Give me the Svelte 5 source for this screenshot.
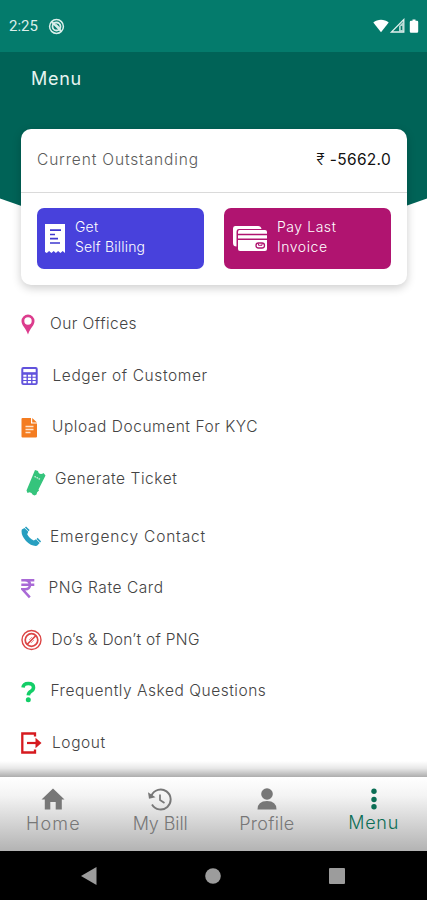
<script>
  let active = 'Menu';

  // gap = space between icon and label, ls = letter spacing
  const items = [
    { icon: 'pin', label: 'Our Offices', w: 14, gap: 15, ls: 0.45 },
    { icon: 'calc', label: 'Ledger of Customer', w: 17, gap: 14.5, ls: 0.6 },
    { icon: 'doc', label: 'Upload Document For KYC', w: 17, gap: 14, ls: 0.55 },
    { icon: 'ticket', label: 'Generate Ticket', w: 28, gap: 6, ls: 0.55 },
    { icon: 'phone', label: 'Emergency Contact', w: 20, gap: 9, ls: 0.82 },
    { icon: 'rupee', label: 'PNG Rate Card', w: 14, gap: 13.5, ls: 0.55 },
    { icon: 'ban', label: 'Do’s & Don’t of PNG', w: 21, gap: 9.5, ls: 0.28 },
    { icon: 'faq', label: 'Frequently Asked Questions', w: 16, gap: 13.5, ls: 0.53 },
    { icon: 'logout', label: 'Logout', w: 21, gap: 10, ls: 0.6 }
  ];

  const tabs = [
    { label: 'Home', ls: 1.2 },
    { label: 'My Bill', ls: -0.1 },
    { label: 'Profile', ls: 0.3 },
    { label: 'Menu', ls: 0.7 }
  ];
</script>

<div class="screen">
  <div class="status">
    <span class="time">2:25</span>
    <svg class="dnd" width="17" height="17" viewBox="0 0 17 17" fill="none" stroke="#dcefeb">
      <circle cx="8.5" cy="8.5" r="6.9" stroke-width="1.5" />
      <circle cx="8.5" cy="8.5" r="4" stroke-width="1.8" />
      <path d="M4 4l9 9" stroke-width="2" />
      <path d="M8 6.5l3.5 3.5" stroke-width="1.5" />
    </svg>
    <svg class="signals" width="48" height="16" viewBox="0 0 48 16">
      <path d="M0.3 4.6C4.500 0.800 11.500 0.800 15.700 4.600L8 14.200z" fill="#fff" />
      <path d="M30.800 1.600V14H18.400z" fill="none" stroke="#e3f1ee" stroke-width="1.300" />
      <path d="M30 4V13.500H26V8z" fill="#dcefeb" opacity=".8" />
      <path d="M28.500 8v4" stroke="#087a69" stroke-width="1.500" />
      <path d="M39.500 1.500h3v1.300h1.500q1.200 0 1.200 1.200v9.500q0 1.200-1.200 1.200h-6q-1.200 0-1.200-1.200V4q0-1.200 1.200-1.200h1.500z" fill="#fff" />
    </svg>
  </div>

  <header>
    <h1>Menu</h1>
    <svg class="curve" width="427" height="52" viewBox="0 0 427 52" preserveAspectRatio="none">
      <path d="M0 0H427V7.500Q213 87 0 7.500z" fill="#006357" />
    </svg>
  </header>

  <section class="card">
    <div class="outstanding">
      <span class="caption">Current Outstanding</span>
      <span class="amount"><i>₹</i>-5662.0</span>
    </div>
    <div class="actions">
      <button class="billing">
        <svg width="22" height="32" viewBox="0 0 22 32">
          <path d="M1 1H21V30l-2.300-2-2.300 2-2.300-2-2.200 2-2.200-2-2.300 2-2.300-2-2.300 2-1.800-1z" fill="#fff" />
          <path d="M6 7.200h11M6 11.500h5M6 15.700h8M6 20h10" stroke="#3f38cf" stroke-width="1.700" />
        </svg>
        <span>Get<br />Self Billing</span>
      </button>
      <button class="invoice">
        <svg width="36" height="28" viewBox="0 0 36 28">
          <path d="M3 1H26q3 0 3.500 3H7Q4.500 4 4.500 7v14.500Q1 21.500 1 18V3.500Q1 1 3 1z" fill="#fff" />
          <path d="M7.500 5H33q2 0 2 2v17q0 2-2 2H8q-2 0-2-2V7q0-2 1.500-2z" fill="#fff" />
          <path d="M5.500 9.500H35M5.500 14.300H35" stroke="#b01470" stroke-width="1.500" />
          <rect x="24" y="18" width="8.500" height="5" rx="2.500" fill="none" stroke="#b01470" stroke-width="1.300" />
          <path d="M26.500 18.500v1.800h3.500v-1.800" fill="none" stroke="#b01470" />
        </svg>
        <span>Pay Last<br />Invoice</span>
      </button>
    </div>
  </section>

  <ul>
    {#each items as item}
      <li class={item.icon}>
        <svg width={item.w} height="28" viewBox="0 0 {item.w} 28">
          {#if item.icon === 'pin'}
            <path d="M7 4.500a6.500 6.500 0 0 0-6.500 6.500C.5 15.500 4.500 17.500 7 24.500 9.500 17.500 13.500 15.500 13.500 11A6.500 6.500 0 0 0 7 4.500zM7 7.300a3.700 3.700 0 1 1 0 7.400 3.700 3.700 0 0 1 0-7.400z" fill="#dc3c8d" fill-rule="evenodd" />
          {:else if item.icon === 'calc'}
            <rect x=".3" y="6" width="16.400" height="18" rx="2" fill="#6152dc" />
            <path d="M2.300 8h12.400v3.200H2.300z" fill="#fff" />
            <path d="M2.300 14.700h12.400M2.300 17.900h12.400M2.300 21.100h12.400" stroke="#fff" stroke-width="2.100" stroke-dasharray="3.200 1.400" />
          {:else if item.icon === 'doc'}
            <path d="M1.500 5H10v5.500h6V23.500q0 1-1 1H1.500q-1 0-1-1V6q0-1 1-1zM11.200 5l4.800 4.500h-4.800z" fill="#f47c20" />
            <path d="M4.500 13.500h8M4.500 16.500h8M4.500 19.500h5" stroke="#ffe2c8" stroke-width="1.300" />
          {:else if item.icon === 'ticket'}
            <path d="M14 2L17 3Q17.500 6 20 6Q21.500 5.800 22.500 5L24.500 7.500L17.500 21.500L18 22.500Q15.500 24 15.500 26.500L13.500 27.500L11.500 26.500Q11 24.500 8.500 24.300L6.500 25L5.500 22.500Z" fill="#35c47c" />
            <path d="M13.500 8.500l6 3" stroke="#d7f5e5" stroke-width="1.300" stroke-dasharray="1.500 .8" />
          {:else if item.icon === 'phone'}
            <path d="M.8 7.500L3.500 6 7.300 9.800 6.200 12.300Q8 16.200 12.800 18.500L15 17.300 18.700 21 16 23.800Q10.500 24.600 5 19Q-.5 13 .8 7.500z" fill="#279fc0" />
            <path d="M4.500 5l3.600 3.600M16.100 16.400l3.500 3.500" stroke="#279fc0" stroke-width="1.500" />
          {:else if item.icon === 'rupee'}
            <path d="M.3 6.300h13M.3 10.800h13M.5 6.300h3.500q5 .3 5 4.500 0 4.500-5 4.500H1.500L8.800 23.300" fill="none" stroke="#a969d6" stroke-width="2.500" />
          {:else if item.icon === 'ban'}
            <circle cx="10.500" cy="15" r="9.500" fill="none" stroke="#dc4545" stroke-width="1.400" />
            <circle cx="10.500" cy="15" r="6.300" fill="none" stroke="#dc4545" stroke-width="1.700" />
            <path d="M6 19.500l9-9" stroke="#dc4545" stroke-width="1.700" />
            <path d="M8 15l3-3M10 18l3-3" stroke="#e98080" stroke-width=".8" />
          {:else if item.icon === 'faq'}
            <path d="M2 10.500Q2.500 6.500 7.300 6.500q5.200 0 5.200 4 0 2.200-2.500 3.800-2.500 1.500-2.700 4" fill="none" stroke="#13ce68" stroke-width="3.600" />
            <circle cx="7.300" cy="22.800" r="2.500" fill="#13ce68" />
          {:else}
            <path d="M14 8.500V5.500H1.300V24.500H14V21.500" fill="none" stroke="#d61a1f" stroke-width="2.300" />
            <path d="M6 15H17" stroke="#d61a1f" stroke-width="2.200" />
            <path d="M14.500 9.800L20.500 15 14.500 20.200z" fill="#d61a1f" />
          {/if}
        </svg>
        <span style="margin-left:{item.gap}px;letter-spacing:{item.ls}px">{item.label}</span>
      </li>
    {/each}
  </ul>

  <nav>
    {#each tabs as tab}
      <button class:active={tab.label === active} on:click={() => (active = tab.label)}>
        <svg width="26" height="24" viewBox="0 0 26 24" fill="currentColor">
          {#if tab.label === 'Home'}
            <path d="M13 .5L24.500 11.500H21.800V21.500H15.700V14H10.300V21.500H4.800V11.500H1.500z" />
          {:else if tab.label === 'My Bill'}
            <path d="M4.500 7.500A10 10 0 1 1 5 16.500" fill="none" stroke="currentColor" stroke-width="1.900" />
            <path d="M1 4.300L2 10.800 8.500 9.300z" />
            <path d="M13 6.500v5.500l4.500 3" fill="none" stroke="currentColor" stroke-width="1.700" />
          {:else if tab.label === 'Profile'}
            <circle cx="13" cy="6" r="5.800" />
            <path d="M3.500 21.500Q3.500 13 13 13t9.500 8.500z" />
          {:else}
            <circle cx="13" cy="3.300" r="2.700" />
            <circle cx="13" cy="11.500" r="2.700" />
            <circle cx="13" cy="18.700" r="2.700" />
          {/if}
        </svg>
        <span style="letter-spacing:{tab.ls}px">{tab.label}</span>
      </button>
    {/each}
  </nav>

  <div class="system">
    <svg width="16" height="18" viewBox="0 0 16 18"><path d="M0 9L15.500 0V18z" fill="#9c9c9c" /></svg>
    <svg width="16" height="16" viewBox="0 0 16 16"><circle cx="8" cy="8" r="7.800" fill="#9c9c9c" /></svg>
    <svg width="16" height="16" viewBox="0 0 16 16"><rect width="16" height="16" rx="1" fill="#9c9c9c" /></svg>
  </div>
</div>

<style>
:global(body) {
  margin: 0;
  background: #fff;
}
.screen {
  width: 427px;
  height: 900px;
  overflow: hidden;
  display: flex;
  flex-direction: column;
  background: #fff;
  color: #444;
  font-family: Inter, 'Open Sans', sans-serif;
  font-weight: 300;
}
svg {
  display: block;
  flex: none;
}
button {
  border: 0;
  padding: 0;
  font: inherit;
}
.status {
  height: 52px;
  flex: none;
  box-sizing: border-box;
  display: flex;
  align-items: center;
  padding: 0 6px 0 9px;
  background: #047b6c;
}
.time {
  color: #dcefeb;
  font: 400 15px Roboto, sans-serif;
  width: 39px;
}
.signals {
  margin-left: auto;
}
header {
  height: 77px;
  flex: none;
  background: #006357;
  display: flex;
  flex-direction: column;
  justify-content: space-between;
}
h1 {
  margin: 15px 0 0 31px;
  color: #e6f3f0;
  font-size: 18px;
  line-height: 24px;
  font-weight: 400;
  letter-spacing: 0.7px;
}
.curve {
  margin-bottom: -114px;
  padding-top: 62px;
  background: linear-gradient(#006357 62px, transparent 62px);
}
.card {
  position: relative;
  flex: none;
  box-sizing: border-box;
  width: 386px;
  height: 156px;
  margin-left: 21px;
  background: #fff;
  border-radius: 10px;
  box-shadow: 0 3px 10px rgba(0, 0, 0, 0.2);
}
.outstanding {
  height: 63px;
  padding: 0 16px;
  display: flex;
  align-items: center;
  justify-content: space-between;
  border-bottom: 1px solid #dadada;
  font-size: 15.5px;
}
.outstanding span {
  margin-top: -2px;
}
.caption {
  letter-spacing: 0.85px;
  color: #5c5c5c;
}
.amount {
  color: #111;
  font-weight: 400;
  letter-spacing: 0.3px;
}
.amount i {
  font-style: normal;
  font-weight: 300;
  margin-right: 5px;
}
.actions {
  display: flex;
  gap: 20px;
  padding: 15px 16px;
}
.actions button {
  width: 167px;
  height: 61px;
  border-radius: 7px;
  display: flex;
  align-items: center;
  text-align: left;
  color: #fff;
  font-size: 14px;
  line-height: 20px;
}
.actions span {
  margin-top: -3px;
}
.billing {
  background: #4841dc;
  padding-left: 7px;
  gap: 9px;
  letter-spacing: 0.2px;
}
.invoice {
  background: #b01470;
  padding-left: 8px;
  gap: 9px;
  letter-spacing: 0.55px;
}
ul {
  list-style: none;
  margin: 0;
  padding: 13px 0 0 21px;
  height: 479px;
  flex: none;
}
li {
  height: 51.6px;
  display: flex;
  align-items: center;
  font-size: 15.5px;
  white-space: nowrap;
}
.ticket {
  height: 57.5px;
}
.ticket span {
  margin-top: -6px;
}
nav {
  position: relative;
  height: 74px;
  flex: none;
  display: grid;
  grid-template-columns: repeat(4, 1fr);
  background: linear-gradient(#fff 0%, #f4f4f4 25%, #b3b3b3 100%);
}
/* shade cast on the list above the bar */
nav::before {
  content: '';
  position: absolute;
  left: 0;
  right: 0;
  top: -16px;
  height: 16px;
  background: linear-gradient(rgba(0, 0, 0, 0), rgba(0, 0, 0, 0.09) 45%, rgba(0, 0, 0, 0.32));
}
nav button {
  background: none;
  color: #777;
  display: flex;
  flex-direction: column;
  align-items: center;
  padding-top: 11px;
  font-size: 18px;
  line-height: 23px;
}
nav .active {
  color: #0b6e55;
}
nav .active span {
  margin-top: -1px;
}
.system {
  height: 49px;
  flex: none;
  display: flex;
  align-items: center;
  justify-content: space-between;
  padding: 0 82px 0 81px;
  background: #000;
}
</style>
